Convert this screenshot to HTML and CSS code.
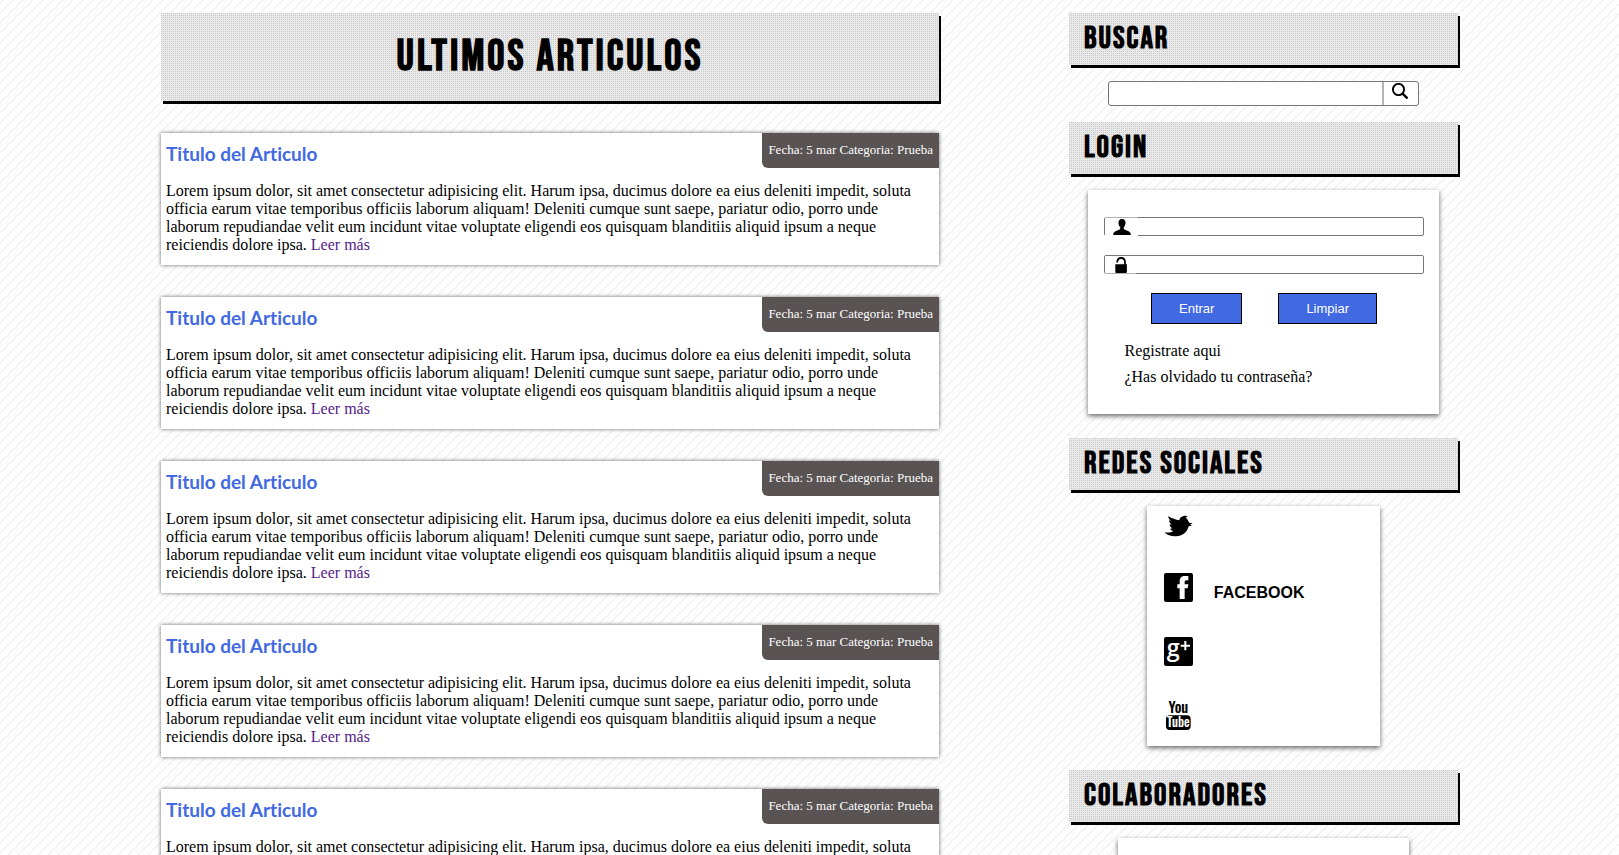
FILE: index.html
```html
<!DOCTYPE html>
<html lang="es">
<head>
<meta charset="utf-8">
<title>Ultimos Articulos</title>
<link rel="stylesheet" href="styles.css">
</head>
<body>
<div class="page">
  <main class="articles">
    <h1 class="banner banner-main">ULTIMOS ARTICULOS</h1>
    <article class="article">
      <header class="article-head"><h2 class="article-title">Titulo del Articulo</h2><p class="article-meta">Fecha: 5 mar Categoria: Prueba</p></header>
      <p class="article-text">Lorem ipsum dolor, sit amet consectetur adipisicing elit. Harum ipsa, ducimus dolore ea eius deleniti impedit, soluta officia earum vitae temporibus officiis laborum aliquam! Deleniti cumque sunt saepe, pariatur odio, porro unde laborum repudiandae velit eum incidunt vitae voluptate eligendi eos quisquam blanditiis aliquid ipsum a neque reiciendis dolore ipsa. <a class="more" href="#">Leer más</a></p>
    </article>
    <article class="article">
      <header class="article-head"><h2 class="article-title">Titulo del Articulo</h2><p class="article-meta">Fecha: 5 mar Categoria: Prueba</p></header>
      <p class="article-text">Lorem ipsum dolor, sit amet consectetur adipisicing elit. Harum ipsa, ducimus dolore ea eius deleniti impedit, soluta officia earum vitae temporibus officiis laborum aliquam! Deleniti cumque sunt saepe, pariatur odio, porro unde laborum repudiandae velit eum incidunt vitae voluptate eligendi eos quisquam blanditiis aliquid ipsum a neque reiciendis dolore ipsa. <a class="more" href="#">Leer más</a></p>
    </article>
    <article class="article">
      <header class="article-head"><h2 class="article-title">Titulo del Articulo</h2><p class="article-meta">Fecha: 5 mar Categoria: Prueba</p></header>
      <p class="article-text">Lorem ipsum dolor, sit amet consectetur adipisicing elit. Harum ipsa, ducimus dolore ea eius deleniti impedit, soluta officia earum vitae temporibus officiis laborum aliquam! Deleniti cumque sunt saepe, pariatur odio, porro unde laborum repudiandae velit eum incidunt vitae voluptate eligendi eos quisquam blanditiis aliquid ipsum a neque reiciendis dolore ipsa. <a class="more" href="#">Leer más</a></p>
    </article>
    <article class="article">
      <header class="article-head"><h2 class="article-title">Titulo del Articulo</h2><p class="article-meta">Fecha: 5 mar Categoria: Prueba</p></header>
      <p class="article-text">Lorem ipsum dolor, sit amet consectetur adipisicing elit. Harum ipsa, ducimus dolore ea eius deleniti impedit, soluta officia earum vitae temporibus officiis laborum aliquam! Deleniti cumque sunt saepe, pariatur odio, porro unde laborum repudiandae velit eum incidunt vitae voluptate eligendi eos quisquam blanditiis aliquid ipsum a neque reiciendis dolore ipsa. <a class="more" href="#">Leer más</a></p>
    </article>
    <article class="article">
      <header class="article-head"><h2 class="article-title">Titulo del Articulo</h2><p class="article-meta">Fecha: 5 mar Categoria: Prueba</p></header>
      <p class="article-text">Lorem ipsum dolor, sit amet consectetur adipisicing elit. Harum ipsa, ducimus dolore ea eius deleniti impedit, soluta officia earum vitae temporibus officiis laborum aliquam! Deleniti cumque sunt saepe, pariatur odio, porro unde laborum repudiandae velit eum incidunt vitae voluptate eligendi eos quisquam blanditiis aliquid ipsum a neque reiciendis dolore ipsa. <a class="more" href="#">Leer más</a></p>
    </article>
  </main>
  <aside class="sidebar">
    <section class="block">
      <h2 class="banner banner-side">BUSCAR</h2>
      <form class="search">
        <input class="search-input" type="text" aria-label="Buscar">
        <button class="search-button" type="button" aria-label="Buscar">
          <svg class="search-icon" viewBox="0 0 16 16"><circle cx="6.500" cy="6.500" r="5.600" fill="none" stroke="#000" stroke-width="1.900"/><path d="M10.500 10.500l5 5" stroke="#000" stroke-width="2.400"/></svg>
        </button>
      </form>
    </section>
    <section class="block">
      <h2 class="banner banner-side">LOGIN</h2>
      <form class="card login">
        <div class="field">
          <input class="field-input" type="text" id="user" aria-label="Usuario">
          <label class="field-icon field-icon-user" for="user"><svg class="glyph" viewBox="0 0 18 16"><path d="M9 0C6.500 0 5.300 1.700 5.500 4c.1 2 .8 3.300 1.700 4.200v1.900c-.8.900-2.500 1.300-4.200 1.900C1 12.800.2 13.700.2 16h17.600c0-2.300-.8-3.200-2.800-4-1.700-.6-3.400-1-4.200-1.900V8.200c.9-.9 1.600-2.200 1.700-4.200.2-2.300-1-4-3.500-4z"/></svg></label>
        </div>
        <div class="field">
          <input class="field-input" type="password" id="pass" aria-label="Contraseña">
          <label class="field-icon field-icon-lock" for="pass"><svg class="glyph" viewBox="0 0 18 16"><path d="M4.200 5.500C4.200 2.500 5.500 1 8.100 1S12 2.500 12 5.500v2.500" fill="none" stroke="#000" stroke-width="1.800"/><path d="M2.300 7.300h11.600V15a1 1 0 0 1-1 1H3.300a1 1 0 0 1-1-1z"/></svg></label>
        </div>
        <div class="actions">
          <button class="action" type="button">Entrar</button>
          <button class="action" type="reset">Limpiar</button>
        </div>
        <div class="links"><a class="plain" href="#">Registrate aqui</a><a class="plain" href="#">¿Has olvidado tu contraseña?</a></div>
      </form>
    </section>
    <section class="block">
      <h2 class="banner banner-side">REDES SOCIALES</h2>
      <nav class="card social">
        <a class="network" href="#" aria-label="Twitter"><svg class="network-icon" viewBox="0 0 87 87"><path d="M2 69c8 3 18 2 26-3-5-1-8-3-9-7l6-1c-5-3-8-7-8-12l6 1c-5-4-8-9-8-13l5 2c-5-6-8-10-7-14 11 7 22 10 33 12 1-8 7-12 13-13 5-2 9-1 12 2l-7 3c5 2 8 6 9 11l4 5h9l-8 5 6 3-10 2C70 69 55 82 36 82 21 82 8 78 2 69z"/></svg></a>
        <a class="network" href="#"><svg class="network-icon" viewBox="0 0 87 87"><rect width="87" height="87" rx="6"/><path fill="#fff" d="M73 9v13h-6c-4 0-5 2-5 6v6h11l-2 12h-9v32H47V46h-7V34h7v-8c0-12 6-17 16-17z"/></svg><span class="network-name">FACEBOOK</span></a>
        <a class="network" href="#" aria-label="Google Plus"><svg class="network-icon" viewBox="0 0 87 87"><rect width="87" height="87" rx="6"/><text class="logo-g" x="8" y="57">g</text><path d="M64 12v28M50 26h28" stroke="#fff" stroke-width="6"/></svg></a>
        <a class="network" href="#" aria-label="YouTube"><svg class="network-icon" viewBox="0 0 87 87"><text class="logo-you" x="43" y="36" text-anchor="middle">You</text><rect x="6" y="43" width="74" height="44" rx="11"/><text class="logo-tube" x="43" y="79" text-anchor="middle">Tube</text></svg></a>
      </nav>
    </section>
    <section class="block">
      <h2 class="banner banner-side">COLABORADORES</h2>
      <div class="card partners"></div>
    </section>
  </aside>
</div>
</body>
</html>
```
FILE: styles.css
```css
* { box-sizing: border-box; }
body {
  margin: 0;
  background: #fff linear-gradient(135deg, transparent 46%, #e8e8e8 47%, #e8e8e8 53%, transparent 54%) 3px 0 / 10px 10px;
  color: #000;
  font: 16px/18px "Liberation Serif", serif;
  height: 100vh;
  overflow: hidden;
}
h1, h2, p { margin: 0; }
a { text-decoration: none; }
.page {
  display: grid;
  grid-template-columns: 161fr 778fr 130fr 389fr 161fr;
  padding-top: 13px;
}
.articles { grid-column: 2; display: flex; flex-direction: column; gap: 32px; min-width: 0; }
.banner {
  background: #e8e8e8 conic-gradient(#e8e8e8 75%, #cbcbcb 75%) 0 0 / 2px 2px;
  box-shadow: 2px 3px 0 #000;
  font-family: "Bebas Neue", "DejaVu Sans Condensed", sans-serif;
  font-weight: bold;
}
.banner-main { padding: 20px; text-align: center; font-size: 43px; line-height: 48px; letter-spacing: 3px; }
.banner-side { padding: 10px 15px; font-size: 31px; line-height: 32px; letter-spacing: 2px; }
.article { background: #fff; box-shadow: 0 0 4px rgba(0, 0, 0, .6); padding-bottom: 11px; }
.article-head { display: flex; justify-content: space-between; align-items: flex-start; height: 49px; }
.article-title { padding: 9px 5px 0; color: #4169e1; font: bold 19px/24px "Trebuchet MS", Lato, sans-serif; font-variant-ligatures: none; }
.article-meta { padding: 8px 6px 9px; background: #595353; color: #fff; font-size: 13px; border-bottom-left-radius: 6px; }
.article-text { padding: 0 5px; }
.more { color: #551a8b; }

.sidebar { grid-column: 4; min-width: 0; }
.search { display: flex; width: 80%; height: 25px; margin: 16px auto; border: 1px solid #767676; border-radius: 3px; background: #fff; }
.search-input { flex: 1; min-width: 0; border: 0; background: none; }
.search-button { width: 36px; padding: 1px 8px; border: 0; border-left: 2px solid #b4b4b4; background: none; }
.search-icon { display: block; width: 16px; height: 16px; margin-bottom: 5px; }

.card { margin: 16px auto 24px; background: #fff; box-shadow: 0 2px 5px rgba(0, 0, 0, .6); }
.login { width: 90%; padding: 27px 15px 28px 16px; }
.field { position: relative; display: flex; margin-bottom: 19px; }
.field-input { width: 100%; height: 19px; border: 1px solid #767676; border-radius: 2px; background: #fff; }
.field-icon { position: absolute; left: 1px; top: 1px; width: 33px; height: 18px; padding: 1px 8px 0; background: #fff; }
.field-icon-user { border-top: 1px solid #b4b4b4; top: 0; height: 19px; }
.field-icon-lock { border-bottom: 1px solid #b4b4b4; width: 31px; }
.glyph { display: block; width: 18px; height: 16px; }
.actions { display: flex; justify-content: center; gap: 36px; }
.action { height: 31px; padding: 0 27px; border: 1px solid #000; background: #4169e1; color: #fff; font: 13px/16px "Liberation Sans", sans-serif; }
.links { display: flex; flex-direction: column; align-items: flex-start; gap: 8px; padding: 18px 20px 0; }
.plain { color: #000; }
.social { width: 60%; padding: 3px 17px 16px; display: flex; flex-direction: column; gap: 35px; }
.network { display: flex; align-items: center; gap: 21px; color: #000; }
.network-icon { width: 29px; height: 29px; }
.network-name { padding-top: 10px; font: bold 16px/18px "Liberation Sans", sans-serif; }
.logo-g { font: 600 70px "Open Sans", sans-serif; fill: #fff; }
.logo-you { font: 500 44px Oswald, "Roboto Condensed", Roboto, sans-serif; }
.logo-tube { font: 500 38px Oswald, "Roboto Condensed", Roboto, sans-serif; fill: #fff; }
.partners { width: 75%; height: 160px; }
```
